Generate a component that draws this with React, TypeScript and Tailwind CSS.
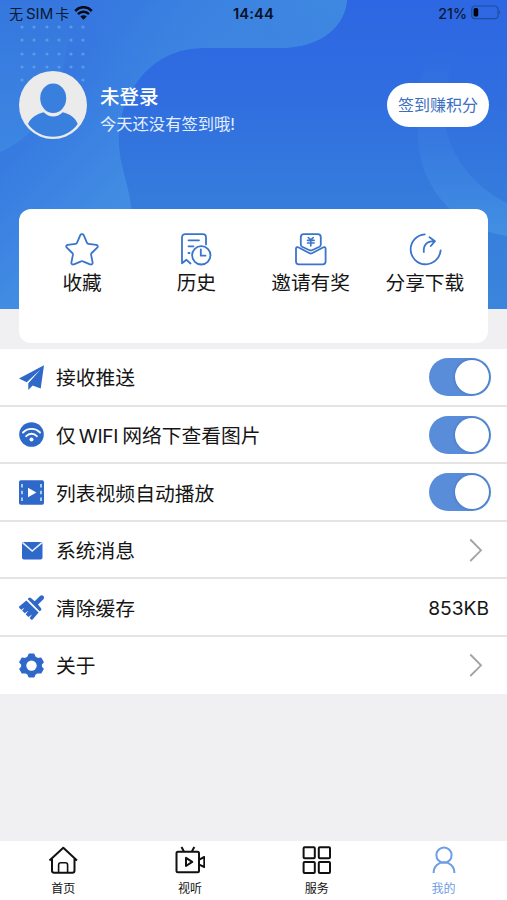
import { ReactNode } from "react";

const HeaderArt = () => (
  <svg
    className="absolute inset-x-0 top-0 h-[309px] w-full"
    viewBox="0 0 507 309"
    preserveAspectRatio="none"
  >
    <defs>
      <linearGradient id="base" x1="0" y1="0" x2="0" y2="1">
        <stop offset="0" stopColor="#2d67e3" />
        <stop offset="0.3" stopColor="#306de0" />
        <stop offset="0.65" stopColor="#357cdc" />
        <stop offset="1" stopColor="#3b85dc" />
      </linearGradient>
      <linearGradient id="blob" gradientUnits="userSpaceOnUse" x1="20" y1="120" x2="110" y2="210">
        <stop offset="0" stopColor="#3678e0" />
        <stop offset="0.4" stopColor="#3a80e1" />
        <stop offset="1" stopColor="#428de3" />
      </linearGradient>
      <linearGradient id="left" x1="0" y1="0" x2="0" y2="1">
        <stop offset="0" stopColor="#3577de" />
        <stop offset="1" stopColor="#3d86e2" />
      </linearGradient>
      <radialGradient id="glow" cx="0.5" cy="0.5" r="0.5">
        <stop offset="0" stopColor="#3c84e0" />
        <stop offset="1" stopColor="#3c84e0" stopOpacity="0" />
      </radialGradient>
      <linearGradient id="ring" gradientUnits="userSpaceOnUse" x1="0" y1="50" x2="0" y2="236">
        <stop offset="0" stopColor="#3878e0" stopOpacity="0" />
        <stop offset="0.5" stopColor="#387be0" stopOpacity="0.8" />
        <stop offset="1" stopColor="#4290e2" />
      </linearGradient>
      <clipPath id="blobClip">
        <path d="M0 0H347C345 24 325 48 277 48H203C150 48 117 95 119 145C120 168 130 186 132 215V309H0Z" />
      </clipPath>
    </defs>
    <rect width="507" height="309" fill="url(#base)" />
    <g clipPath="url(#blobClip)">
      <rect width="347" height="309" fill="url(#blob)" />
      <ellipse cx="275" cy="35" rx="190" ry="100" fill="url(#glow)" />
      <path d="M0 152C26 142 56 112 63 68C66 48 72 28 77 0H0Z" fill="url(#left)" />
    </g>
    <path
      d="M430 50C418 80 416 105 418 130A102 102 0 0 0 507 236V203A113 113 0 0 1 446 130C442 105 446 75 458 50Z"
      fill="url(#ring)"
    />
    {[27, 40, 54, 67, 80].map((y) =>
      [22, 34, 47, 59, 71, 83].map((x) => (
        <circle key={`${x}-${y}`} cx={x} cy={y} r="1.6" fill="#599be9" />
      ))
    )}
  </svg>
);

const StatusBar = () => (
  <div className="relative grid h-7 grid-cols-3 items-center pl-[9px] pr-[6px] text-[14.5px] font-medium text-[#0b1833]">
    <div className="flex items-center">
      <span className="-mt-[2px] text-[14px] font-normal">无</span>
      <span className="ml-[3px] mr-[2px] text-[15px] font-normal">SIM</span>
      <span className="-mt-[2px] text-[14px] font-normal">卡</span>
      <svg className="-mt-[2px] ml-[5px] h-[14px] w-[19px]" viewBox="0 0 19 14" fill="none" stroke="#050b16">
        <path d="M1.2 5C6-.1 13-.1 17.8 5" strokeWidth="2.6" />
        <path d="M4 8.1C7.2 5 11.8 5 15 8.1" strokeWidth="2.5" />
        <path d="M9.5 13.7L6.3 10.5C8 8.9 11 8.9 12.7 10.5Z" fill="#050b16" stroke="none" />
      </svg>
    </div>
    <div className="-ml-[3px] text-center text-[14.8px] font-semibold tracking-[0.1px] text-[#081126]">14:44</div>
    <div className="flex items-center justify-end">
      <span className="text-[14.2px]">21%</span>
      <svg className="-mt-[2px] ml-[4px] h-[15px] w-[30px]" viewBox="0 0 30 15">
        <rect x="0.7" y="1" width="26.3" height="12.6" rx="3.2" fill="none" stroke="#1f4d9f" strokeWidth="1.2" />
        <rect x="2.6" y="3" width="4.6" height="8.6" rx="1.6" fill="#020409" />
        <path d="M28 5.2C29.6 5.8 29.6 8.8 28 9.4Z" fill="#1f4d9f" />
      </svg>
    </div>
  </div>
);

const Avatar = () => (
  <svg className="h-[68px] w-[68px]" viewBox="0 0 68 68">
    <circle cx="34" cy="34" r="34" fill="#ebebeb" />
    <ellipse cx="34.2" cy="27.3" rx="13" ry="14.8" fill="#397fde" />
    <path
      d="M9 53C12 46 18 43 24.7 41.2C30 46.8 38.5 46.8 43.7 41.2C51 43 56.5 46.5 58.7 53C47 70 21 70 9 53Z"
      fill="#397fde"
    />
  </svg>
);

const shortcuts: { label: string; icon: ReactNode }[] = [
  {
    label: "收藏",
    icon: (
      <path d="M15.3 2.1C16 .8 18 .8 18.7 2.1L21.9 9.6C22.2 10.3 22.7 10.7 23.4 10.8L31.3 11.8C32.8 12 33.3 13.6 32.2 14.6L26.7 20C26.2 20.5 26 21.2 26.1 21.9L27.6 29.5C27.9 31 26.4 32 25.1 31.3L17.9 28.3C17.3 28 16.7 28 16.1 28.3L8.9 31.3C7.6 32 6.1 31 6.4 29.5L7.9 21.9C8 21.2 7.8 20.5 7.3 20L1.8 14.6C.7 13.6 1.2 12 2.7 11.8L10.6 10.8C11.3 10.7 11.8 10.3 12.1 9.6Z" />
    ),
  },
  {
    label: "历史",
    icon: (
      <>
        <path d="M27 11.5V4.5Q27 1.2 23.7 1.2H6.3Q3 1.2 3 4.5V30.3L7.5 26.8L11.5 30.5" />
        <path d="M9.5 7.3H20M9.5 13.3H14.5M9.5 20H10.5" />
        <circle cx="22.3" cy="22.3" r="9.2" />
        <path d="M21.8 16.5V22.7H26.5" />
      </>
    ),
  },
  {
    label: "邀请有奖",
    icon: (
      <>
        <path d="M6.8 11.5V4.2Q6.8 1.2 9.8 1.2H23.8Q26.8 1.2 26.8 4.2V11.5Q26.8 13 25.5 13.8L18 17.2Q16.8 17.7 15.6 17.2L8.1 13.8Q6.8 13 6.8 11.5Z" />
        <path d="M2 15.8Q2 13.4 4.2 14.3L15.6 20.2Q16.8 20.8 18 20.2L29.4 14.3Q31.6 13.4 31.6 15.8V28.5Q31.6 31.3 28.8 31.3H4.8Q2 31.3 2 28.5Z" />
        <path d="M14.3 4.5L16.8 6.8L19.3 4.5M13.5 7.4H20.1M13.5 10H20.1M16.8 6.8V13" strokeWidth="1.6" />
      </>
    ),
  },
  {
    label: "分享下载",
    icon: (
      <>
        <path d="M16.8 1.3A15 15 0 1 0 32.6 17.4" />
        <path d="M15.8 19C15.2 12.5 18.5 8.2 26 8.2M21.5 4.2L27 8.2L22.8 13" />
      </>
    ),
  },
];

const Toggle = () => (
  <div className="mr-[16px] flex h-[38px] w-[62px] justify-end rounded-full bg-[#598dd9] p-[2px]">
    <div className="h-[34px] w-[34px] rounded-full bg-white shadow-[0_0_3px_rgba(25,75,150,0.5)]" />
  </div>
);

const Chevron = () => (
  <svg className="mr-[24px] h-6 w-[14px]" viewBox="0 0 14 24" fill="none" stroke="#a2a2a2" strokeWidth="1.8">
    <path d="M1.3 1.5L12 12.3L1.3 23" />
  </svg>
);

const rows: { label: ReactNode; icon: ReactNode; right: ReactNode }[] = [
  {
    label: "接收推送",
    right: <Toggle />,
    icon: <path d="M25 .2L0 13.6L7.7 17.2L21.5 4.4L9.3 18.2V24.9L13.6 20.4L21.7 23.4Z" />,
  },
  {
    label: (
      <>
        仅<span className="ml-[3px] mr-[4px] text-[19.2px] tracking-[-0.3px]">WIFI</span>网络下查看图片
      </>
    ),
    right: <Toggle />,
    icon: (
      <>
        <circle cx="12.5" cy="12.5" r="12.3" />
        <g fill="none" stroke="white" strokeWidth="1.9" strokeLinecap="round">
          <path d="M4 10.5C8.5 5.6 16.5 5.6 21 10.5M7.2 14.2C10.2 11 14.8 11 17.8 14.2" />
        </g>
        <circle cx="12.5" cy="17.6" r="2" fill="white" />
      </>
    ),
  },
  {
    label: "列表视频自动播放",
    right: <Toggle />,
    icon: (
      <>
        <rect x="0" y="0.3" width="25" height="24.5" rx="1.8" />
        <path d="M9 7.7L17.4 12.5L9 17.3Z" fill="white" />
        <path
          d="M3 4V7.5M3 10.7V14.2M3 17.4V20.9M22 4V7.5M22 10.7V14.2M22 17.4V20.9"
          stroke="#cfe0f8"
          strokeWidth="1.6"
        />
      </>
    ),
  },
  {
    label: "系统消息",
    right: <Chevron />,
    icon: (
      <>
        <rect x="3" y="4" width="20.5" height="17.5" rx="2" />
        <path d="M3.8 4.8L13.2 13L22.7 4.8" fill="none" stroke="#e8f1ff" strokeWidth="1.6" />
      </>
    ),
  },
  {
    label: "清除缓存",
    right: <span className="mr-[18px] mt-[2px] text-[19.2px]">853KB</span>,
    icon: (
      <>
        <path d="M21 .9Q22.8-.5 24.4 1Q25.8 2.8 24.2 4.5L19 9.4L22.2 13.4Q22.7 14.6 21.8 15.4L20.6 16.2L8.6 4.1L9.8 2.9Q10.9 2.2 11.9 3L15.7 6.2Z" />
        <path d="M7.4 5.5L19.6 17.6L13.6 24.6Q12.6 25.2 11.8 24.3L10.6 23L13 19.4L9.4 21.9L6.7 19.4L9.2 15.8L5.7 18.2L3.2 15.8L5.5 12.7L2.2 14.7L.3 12.9Q-.3 11.8.7 10.9Z" />
      </>
    ),
  },
  {
    label: "关于",
    right: <Chevron />,
    icon: (
      <>
        <path
          d="M10.2 1.2H14.8L16 4L18.7 5.6L21.8 5.2L24.1 9.2L22.2 11.2V13.9L24.1 15.9L21.8 19.9L18.7 19.5L16 21.1L14.8 23.9H10.2L9 21.1L6.3 19.5L3.2 19.9L.9 15.9L2.8 13.9V11.2L.9 9.2L3.2 5.2L6.3 5.6L9 4Z"
          stroke="#2e69c9"
          strokeWidth="1.4"
          strokeLinejoin="round"
        />
        <circle cx="12.5" cy="12.6" r="5.2" fill="white" />
      </>
    ),
  },
];

const tabs: { label: string; icon: ReactNode; active?: boolean }[] = [
  {
    label: "首页",
    icon: (
      <>
        <path d="M1.5 14.5L15.3 1.7L29 14.5M4 12.5V24.5Q4 26.7 6.2 26.7H24.3Q26.5 26.7 26.5 24.5V12.5" />
        <path d="M10.6 26.5V19Q10.6 16.8 12.8 16.8H17.4Q19.6 16.8 19.6 19V26.5" strokeWidth="1.6" />
      </>
    ),
  },
  {
    label: "视听",
    icon: (
      <>
        <rect x="1.5" y="5.8" width="22.5" height="20.4" rx="1.5" />
        <path d="M6.5 1L8.8 5.3M19.3 1L17 5.3M24.2 13.6L29.3 11V21L24.2 18.7M11 11.8V20L17.2 15.9Z" />
      </>
    ),
  },
  {
    label: "服务",
    icon: (
      <>
        <rect x="1.6" y="1.3" width="11.2" height="11" rx="1" />
        <rect x="16.8" y="1.3" width="11.2" height="11" rx="1" />
        <rect x="1.6" y="16" width="11.2" height="11" rx="1" />
        <rect x="16.8" y="16" width="11.2" height="11" rx="1" />
      </>
    ),
  },
  {
    label: "我的",
    active: true,
    icon: (
      <>
        <circle cx="15" cy="9.2" r="7.6" />
        <path d="M4.6 27C4.6 12.8 25.4 12.8 25.4 27" />
      </>
    ),
  },
];

const App = () => {
  return (
    <div className="flex h-[900px] w-full flex-col bg-[#f0f0f2] font-['Inter','Noto_Sans_CJK_SC',sans-serif] text-[#151515]">
      <header className="relative h-[349px] shrink-0">
        <HeaderArt />
        <StatusBar />
        <div className="relative mt-[43px] flex h-[68px] items-center pl-[19px] pr-[18px]">
          <Avatar />
          <div className="ml-[13px] flex flex-col pt-[9px] text-white">
            <span className="text-[19.5px] font-medium leading-[28px]">未登录</span>
            <span className="text-[16.3px] leading-[26px] text-[#e4efff]">今天还没有签到哦!</span>
          </div>
          <button className="ml-auto h-[44px] w-[102px] rounded-full bg-white text-[16px] text-[#3d6fc0]">
            签到赚积分
          </button>
        </div>
        <div className="relative mx-[19px] mt-[70px] grid h-[134px] grid-cols-4 rounded-[12px] bg-white px-[6px] pt-[24px]">
          {shortcuts.map((s) => (
            <div key={s.label} className="flex flex-col items-center">
              <svg
                className="h-[33px] w-[34px]"
                viewBox="0 0 34 33"
                fill="none"
                stroke="#3a74cc"
                strokeWidth="1.8"
                strokeLinejoin="round"
                strokeLinecap="round"
              >
                {s.icon}
              </svg>
              <span className="mt-[3px] whitespace-nowrap text-[19.7px] leading-[28px]">{s.label}</span>
            </div>
          ))}
        </div>
      </header>

      <main className="h-[345px] shrink-0 bg-white">
        {rows.map((row, i) => (
          <div
            key={i}
            className="flex h-[57.6px] items-center border-b-2 border-[#e4e4e5] pl-[19px] pt-[1px] last:border-transparent"
          >
            <svg className="h-[25px] w-[25px] shrink-0" viewBox="0 0 25 25" fill="#2e69c9">
              {row.icon}
            </svg>
            <span className="ml-[12px] mr-auto whitespace-nowrap pt-[4px] text-[19.8px]">{row.label}</span>
            {row.right}
          </div>
        ))}
      </main>

      <nav className="mt-auto grid h-[59px] grid-cols-4 bg-white pt-[5px]">
        {tabs.map((tab) => (
          <div
            key={tab.label}
            className={`flex flex-col items-center ${tab.active ? "text-[#6d9de4]" : "text-[#111]"}`}
          >
            <svg
              className="h-[28px] w-[30px]"
              viewBox="0 0 30 28"
              fill="none"
              stroke="currentColor"
              strokeWidth="2"
              strokeLinejoin="round"
            >
              {tab.icon}
            </svg>
            <span className="mt-[6px] text-[12px] leading-[18px]">{tab.label}</span>
          </div>
        ))}
      </nav>
    </div>
  );
};

export default App;
